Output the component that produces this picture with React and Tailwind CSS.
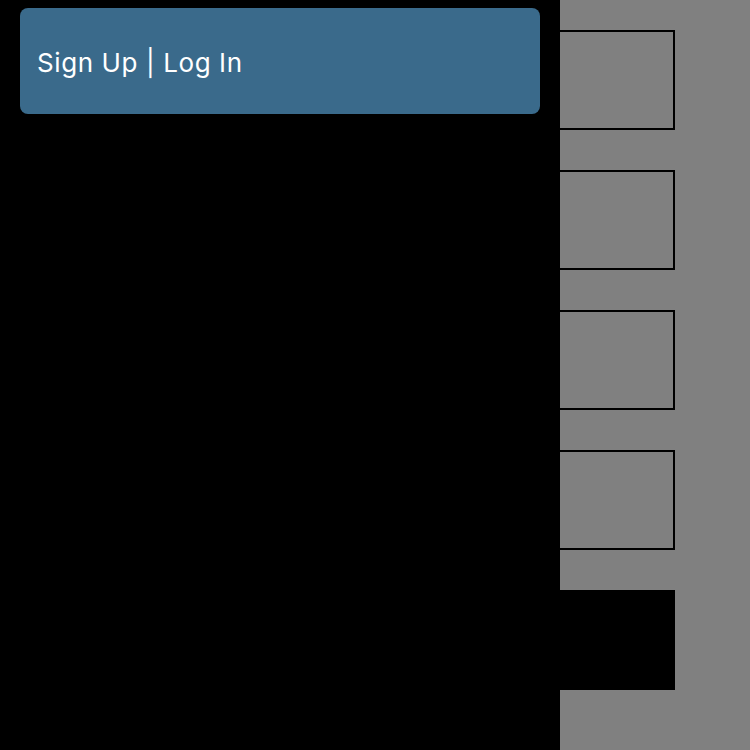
export default function App() {
  const boxes = [false, false, false, false, true];

  return (
    <div className="flex h-[750px] w-[750px] bg-[#808080] font-['Inter',sans-serif]">
      {/* drawer */}
      <div className="h-full w-[560px] bg-black px-5 pt-2">
        <div className="flex h-[106px] items-center rounded-lg bg-[#3a6a8b] px-[17px] pt-[2px]">
          <span className="text-[26px] tracking-[0.6px] text-white">Sign Up | Log In</span>
        </div>
      </div>

      {/* content behind drawer */}
      <div className="flex flex-col gap-10 pt-[30px]">
        {boxes.map((filled, i) => (
          <div
            key={i}
            className={
              filled
                ? 'h-[100px] w-[115px] bg-black'
                : 'h-[100px] w-[115px] border-2 border-l-0 border-black'
            }
          />
        ))}
      </div>
    </div>
  );
}
